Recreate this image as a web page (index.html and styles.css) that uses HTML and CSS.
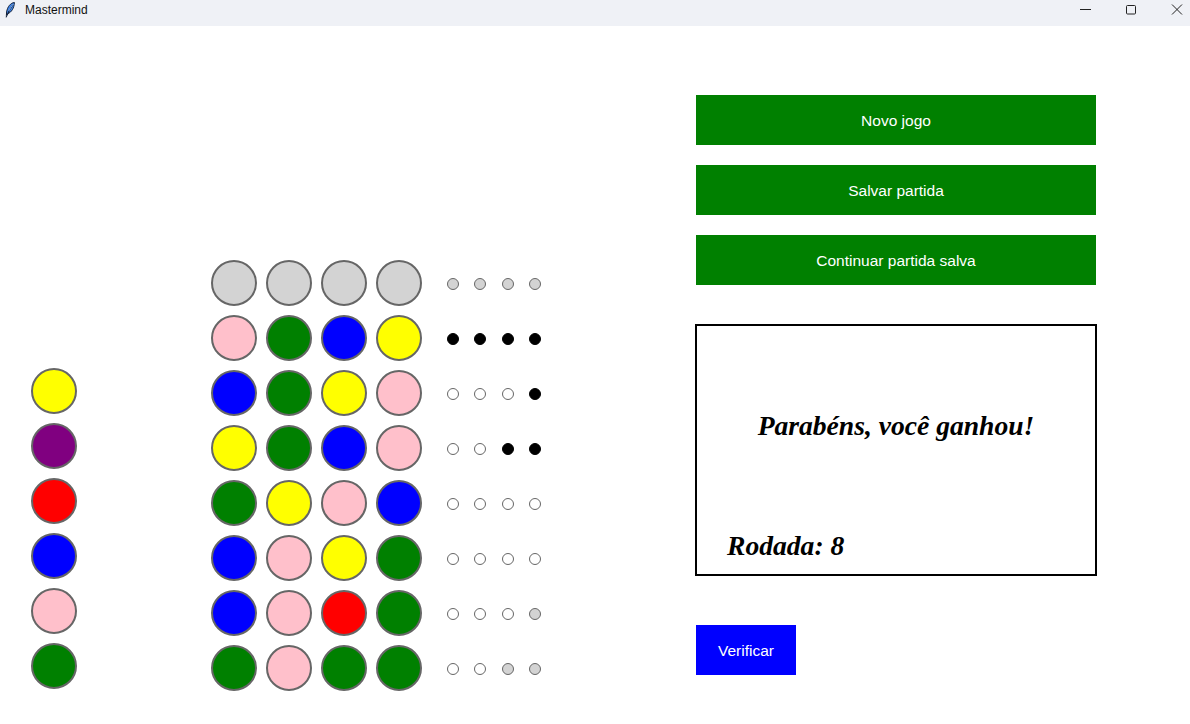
FILE: index.html
```html
<!DOCTYPE html>
<html lang="pt">
<head>
<meta charset="utf-8">
<title>Mastermind</title>
<link rel="stylesheet" href="styles.css">
</head>
<body>
<div class="window">
  <header class="titlebar">
    <svg class="app-icon" width="10" height="16" viewBox="0 0 10 16">
      <path d="M9.4 0.5 C5.8 0.8 2.4 4.6 1.6 10 L1.4 13.4 L2.8 11.6 C6.4 10.4 9.2 6 9.4 0.5 Z" fill="#3f86ec" stroke="#14223a" stroke-width="1"/>
      <path d="M7.8 2.6 C5.8 5.6 3.6 9.6 1 15.4" stroke="#14223a" stroke-width="1.1" fill="none"/>
      <path d="M8.2 2 C6.6 4.2 5 6.6 3.8 9" stroke="#9cc4ff" stroke-width="0.8" fill="none"/>
    </svg>
    <span class="app-title">Mastermind</span>
    <div class="controls">
      <svg class="ctl" width="46" height="26" viewBox="0 0 46 26"><path d="M18 9.5 H29" stroke="#222" stroke-width="1"/></svg>
      <svg class="ctl" width="46" height="26" viewBox="0 0 46 26"><rect x="18.5" y="5.5" width="9" height="8.5" rx="1" fill="none" stroke="#222" stroke-width="1"/></svg>
      <svg class="ctl" width="36" height="26" viewBox="0 0 36 26"><path d="M18 4.5 L28 14.5 M28 4.5 L18 14.5" stroke="#222" stroke-width="1"/></svg>
    </div>
  </header>

  <main class="main">
    <section class="play">
      <div class="secret">
        <div class="circle yellow"></div>
        <div class="circle purple"></div>
        <div class="circle red"></div>
        <div class="circle blue"></div>
        <div class="circle pink"></div>
        <div class="circle green"></div>
      </div>

      <div class="board">
        <div class="row">
          <div class="circle gray"></div><div class="circle gray"></div><div class="circle gray"></div><div class="circle gray"></div>
          <div class="pegs"><span class="peg p-gray"></span><span class="peg p-gray"></span><span class="peg p-gray"></span><span class="peg p-gray"></span></div>
        </div>
        <div class="row">
          <div class="circle pink"></div><div class="circle green"></div><div class="circle blue"></div><div class="circle yellow"></div>
          <div class="pegs"><span class="peg p-black"></span><span class="peg p-black"></span><span class="peg p-black"></span><span class="peg p-black"></span></div>
        </div>
        <div class="row">
          <div class="circle blue"></div><div class="circle green"></div><div class="circle yellow"></div><div class="circle pink"></div>
          <div class="pegs"><span class="peg p-white"></span><span class="peg p-white"></span><span class="peg p-white"></span><span class="peg p-black"></span></div>
        </div>
        <div class="row">
          <div class="circle yellow"></div><div class="circle green"></div><div class="circle blue"></div><div class="circle pink"></div>
          <div class="pegs"><span class="peg p-white"></span><span class="peg p-white"></span><span class="peg p-black"></span><span class="peg p-black"></span></div>
        </div>
        <div class="row">
          <div class="circle green"></div><div class="circle yellow"></div><div class="circle pink"></div><div class="circle blue"></div>
          <div class="pegs"><span class="peg p-white"></span><span class="peg p-white"></span><span class="peg p-white"></span><span class="peg p-white"></span></div>
        </div>
        <div class="row">
          <div class="circle blue"></div><div class="circle pink"></div><div class="circle yellow"></div><div class="circle green"></div>
          <div class="pegs"><span class="peg p-white"></span><span class="peg p-white"></span><span class="peg p-white"></span><span class="peg p-white"></span></div>
        </div>
        <div class="row">
          <div class="circle blue"></div><div class="circle pink"></div><div class="circle red"></div><div class="circle green"></div>
          <div class="pegs"><span class="peg p-white"></span><span class="peg p-white"></span><span class="peg p-white"></span><span class="peg p-gray"></span></div>
        </div>
        <div class="row">
          <div class="circle green"></div><div class="circle pink"></div><div class="circle green"></div><div class="circle green"></div>
          <div class="pegs"><span class="peg p-white"></span><span class="peg p-white"></span><span class="peg p-gray"></span><span class="peg p-gray"></span></div>
        </div>
      </div>
    </section>

    <aside class="panel">
      <button class="btn btn-green">Novo jogo</button>
      <button class="btn btn-green">Salvar partida</button>
      <button class="btn btn-green">Continuar partida salva</button>

      <div class="result">
        <p class="result-msg">Parabéns, você ganhou!</p>
        <p class="result-round">Rodada: 8</p>
      </div>

      <button class="btn btn-blue">Verificar</button>
    </aside>
  </main>
</div>
</body>
</html>
```

FILE: styles.css
```css
* { box-sizing: border-box; }

html, body {
  margin: 0;
  padding: 0;
  background: #ffffff;
}

body {
  font-family: "Liberation Sans", Arial, sans-serif;
  width: 1190px;
  height: 724px;
  overflow: hidden;
}

.window {
  width: 1190px;
  height: 724px;
  display: flex;
  flex-direction: column;
}

/* Title bar */
.titlebar {
  height: 26px;
  flex: none;
  display: flex;
  align-items: flex-start;
  background: #eff1f6;
  padding-left: 5px;
}

.app-icon {
  display: block;
  margin-top: 2px;
}

.app-title {
  margin-left: 10px;
  margin-top: 3px;
  font-size: 12px;
  line-height: 14px;
  color: #111;
  font-family: "Liberation Sans", Arial, sans-serif;
}

.controls {
  margin-left: auto;
  display: flex;
}

.ctl { display: block; }

/* Main area */
.main {
  flex: 1;
  display: flex;
}

.play {
  width: 696px;
  flex: none;
  display: flex;
  align-items: flex-end;
  padding: 0 0 33px 31px;
}

.secret {
  display: flex;
  flex-direction: column;
  gap: 9px;
  margin-bottom: 2px;
}

.board {
  margin-left: 134px;
  display: flex;
  flex-direction: column;
  gap: 9px;
}

.row {
  display: flex;
  align-items: center;
  gap: 9px;
}

.circle {
  width: 46px;
  height: 46px;
  border-radius: 50%;
  border: 2px solid #666666;
  flex: none;
}

.gray   { background: #d3d3d3; }
.pink   { background: #ffc0cb; }
.green  { background: #008000; }
.blue   { background: #0000ff; }
.yellow { background: #ffff00; }
.red    { background: #ff0000; }
.purple { background: #800080; }

.pegs {
  display: grid;
  grid-template-columns: repeat(4, 27.5px);
  margin-left: 8px;
  padding-top: 2px;
  justify-items: center;
  align-items: center;
}

.peg {
  display: block;
  width: 12px;
  height: 12px;
  border-radius: 50%;
}

.p-gray  { background: #d3d3d3; border: 1px solid #666666; }
.p-white { background: #ffffff; border: 1px solid #666666; }
.p-black { background: #000000; border: 1px solid #000000; }

/* Right panel */
.panel {
  display: flex;
  flex-direction: column;
  align-items: flex-start;
  padding-top: 69px;
}

.btn {
  border: none;
  margin: 0 0 20px 0;
  padding: 2px 0 0 0;
  color: #ffffff;
  font-family: "Liberation Sans", Arial, sans-serif;
  font-size: 15.5px;
  display: flex;
  align-items: center;
  justify-content: center;
  cursor: pointer;
}

.btn-green {
  width: 400px;
  height: 50px;
  background: #008000;
}

.btn-blue {
  width: 100px;
  height: 50px;
  background: #0000ff;
  margin-top: 49px;
}

.result {
  margin-top: 19px;
  margin-left: -1px;
  width: 402px;
  height: 252px;
  border: 2px solid #000000;
  display: flex;
  flex-direction: column;
  font-family: "Liberation Serif", "Times New Roman", serif;
  font-weight: bold;
  font-style: italic;
  font-size: 27.6px;
  color: #000;
}

.result-msg {
  margin: 84px 0 0 0;
  line-height: 32px;
  text-align: center;
}

.result-round {
  margin: auto 0 12px 30px;
  line-height: 32px;
}
```
